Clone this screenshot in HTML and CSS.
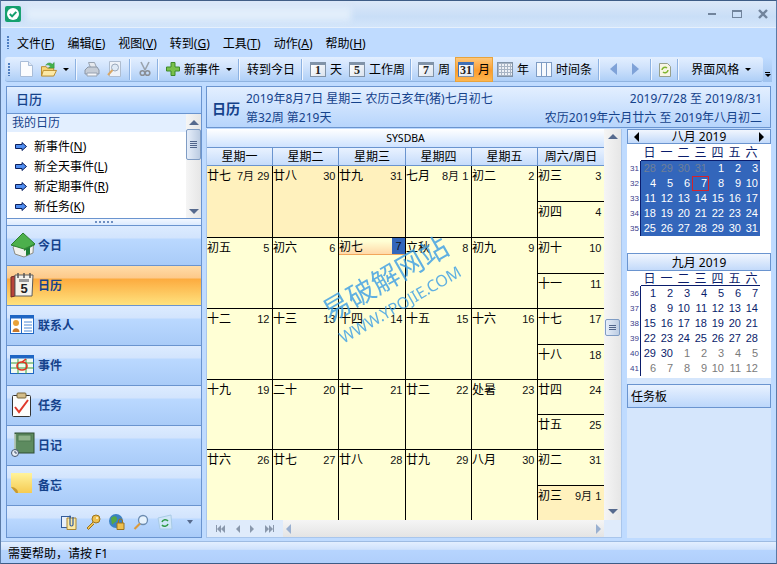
FILE: index.html
```html
<!DOCTYPE html>
<html lang="zh-CN">
<head>
<meta charset="utf-8">
<title>日历</title>
<link rel="stylesheet" href="styles.css">
</head>
<body>
<div class="window">
  <header class="titlebar">
    <svg class="logo" viewBox="0 0 16 16"><rect width="16" height="16" rx="2" fill="#14a06e"/><circle cx="8" cy="8" r="6" fill="#fff"/><path d="M4.8 8l2.3 2.4 4.2-4.6" fill="none" stroke="#14a06e" stroke-width="2"/></svg>
    <div class="title-blur"></div>
    <div class="winbtns">
      <span class="win-min"></span>
      <span class="win-max"></span>
      <svg class="win-close" viewBox="0 0 10 10"><path d="M1 1l8 8M9 1l-8 8" stroke="#71849c" stroke-width="2.4"/></svg>
    </div>
  </header>

  <nav class="menubar">
    <span class="grip"></span>
    <span class="menu">文件(<u>F</u>)</span>
    <span class="menu">编辑(<u>E</u>)</span>
    <span class="menu">视图(<u>V</u>)</span>
    <span class="menu">转到(<u>G</u>)</span>
    <span class="menu">工具(<u>T</u>)</span>
    <span class="menu">动作(<u>A</u>)</span>
    <span class="menu">帮助(<u>H</u>)</span>
  </nav>

  <div class="toolrow">
    <div class="toolbar">
      <span class="grip"></span>
      <span class="tb">
        <svg class="i13" viewBox="0 0 13 16"><path d="M.5.5h8l4 4v11H.5z" fill="#fbfcfe" stroke="#a9bdd8"/><path d="M8.5.5v4h4" fill="#dfe8f4" stroke="#a9bdd8"/></svg>
      </span>
      <span class="tb tb-folder">
        <svg class="i16" viewBox="0 0 17 16"><path d="M.5 5.500h5l1 1.500h7v8H.5z" fill="#f7d67a" stroke="#b98a2a"/><path d="M.5 15.500l2-6h14l-3 6z" fill="#fce9a6" stroke="#b98a2a"/><path d="M5 4c2-3 5-3 7-1l2-2v6H8l2-2c-1-1-3-2-5-1z" fill="#43b14b" stroke="#2c8a36" stroke-width=".5"/></svg>
        <span class="caret caret-gap"></span>
      </span>
      <span class="sep"></span>
      <span class="tb">
        <svg class="i16" viewBox="0 0 16 16"><path d="M4.500 1.500h6l2 5h-6z" fill="#e6e9ee" stroke="#98a3b2"/><path d="M1 9l3-3h9l2 3v4H1z" fill="#c5ccd6" stroke="#8b96a6"/><path d="M3 12h10v3H3z" fill="#f4f5f8" stroke="#98a3b2"/></svg>
      </span>
      <span class="tb">
        <svg class="i14" viewBox="0 0 14 16"><path d="M2.500.5h11v15h-11z" fill="#eef2f8" stroke="#aebccf"/><circle cx="8" cy="6.500" r="3.500" fill="#dfeaf6" stroke="#9aa8ba"/><path d="M5.500 9L1 14" stroke="#d9a765" stroke-width="2"/></svg>
      </span>
      <span class="sep sep-wide"></span>
      <span class="tb">
        <svg class="i12" viewBox="0 0 12 16"><path d="M2 1l4 8M10 1L6 9" stroke="#9aa3ae" stroke-width="1.600"/><circle cx="3.500" cy="12" r="2.300" fill="none" stroke="#8a8f96" stroke-width="1.600"/><circle cx="8.500" cy="12" r="2.300" fill="none" stroke="#8a8f96" stroke-width="1.600"/></svg>
      </span>
      <span class="sep"></span>
      <span class="tb">
        <svg class="i14" viewBox="0 0 14 14"><path d="M5 .5h4V5h4.500v4H9v4.500H5V9H.5V5H5z" fill="#79c04a" stroke="#3d8a2a"/></svg>
        <span class="lbl">新事件</span>
        <span class="caret caret-gap"></span>
      </span>
      <span class="sep"></span>
      <span class="tb"><span class="lbl">转到今日</span></span>
      <span class="sep"></span>
      <span class="tb"><span class="calic"><b>1</b></span><span class="lbl">天</span></span>
      <span class="tb"><span class="calic"><b>5</b></span><span class="lbl">工作周</span></span>
      <span class="sep sep-tight"></span>
      <span class="tb"><span class="calic"><b>7</b></span><span class="lbl">周</span></span>
      <span class="tb tb-on"><span class="calic calic-wide"><b>31</b></span><span class="lbl">月</span></span>
      <span class="tb"><span class="calic calic-year"></span><span class="lbl">年</span></span>
      <span class="tb"><span class="calic calic-time"></span><span class="lbl">时间条</span></span>
      <span class="sep"></span>
      <span class="tb tb-arrow"><span class="tri-l"></span></span>
      <span class="tb tb-arrow"><span class="tri-r"></span></span>
      <span class="sep"></span>
      <span class="tb">
        <svg class="i12" viewBox="0 0 12 16"><path d="M.5 2.500h8l3 3v10H.5z" fill="#f7f5e4" stroke="#98a08a"/><path d="M3 9a3 3 0 0 1 5-2M9 9a3 3 0 0 1-5 2" fill="none" stroke="#7fb52f" stroke-width="1.500"/></svg>
      </span>
      <span class="sep"></span>
      <span class="tb tb-style"><span class="lbl">界面风格</span><span class="caret caret-gap"></span></span>
    </div>
    <span class="overflow"><i></i><b></b></span>
  </div>

  <main class="main">
    <aside class="left">
      <h2 class="left-head">日历</h2>
      <div class="list">
        <div class="list-body">
          <div class="list-title">我的日历</div>
          <div class="list-item"><svg class="arrow" viewBox="0 0 12 9"><path d="M.5 2.500h6.500V.5L11.500 4.500 7 8.500V6.500H.5z" fill="#4f8df0" stroke="#0b1f5c"/></svg>新事件(<u>N</u>)</div>
          <div class="list-item"><svg class="arrow" viewBox="0 0 12 9"><path d="M.5 2.500h6.500V.5L11.500 4.500 7 8.500V6.500H.5z" fill="#4f8df0" stroke="#0b1f5c"/></svg>新全天事件(<u>L</u>)</div>
          <div class="list-item"><svg class="arrow" viewBox="0 0 12 9"><path d="M.5 2.500h6.500V.5L11.500 4.500 7 8.500V6.500H.5z" fill="#4f8df0" stroke="#0b1f5c"/></svg>新定期事件(<u>R</u>)</div>
          <div class="list-item"><svg class="arrow" viewBox="0 0 12 9"><path d="M.5 2.500h6.500V.5L11.500 4.500 7 8.500V6.500H.5z" fill="#4f8df0" stroke="#0b1f5c"/></svg>新任务(<u>K</u>)</div>
        </div>
        <div class="vscroll vscroll-list">
          <span class="tri-up"></span>
          <span class="thumb thumb-list"><i></i><i></i><i></i><i></i></span>
          <span class="spacer"></span>
          <span class="tri-down"></span>
        </div>
      </div>
      <div class="splitter"><span></span></div>
      <div class="nav">
        <div class="nav-item">
          <svg class="nav-ic" viewBox="0 0 26 26"><path d="M3 15l2 7 9 3 9-4 .5-9L13 8z" fill="#f2f2ee" stroke="#8c8c84"/><path d="M1 13L13 1l12 11-11 5z" fill="#4cb04c" stroke="#2a7d2e"/><path d="M14 17l11-5v1l-11 6z" fill="#2f8a34"/><path d="M16 17l4-2v7l-4 2z" fill="#1f7f35"/></svg>
          <span>今日</span>
        </div>
        <div class="nav-item nav-on">
          <svg class="nav-ic" viewBox="0 0 26 26"><path d="M1 5l4-1v20l-4 1z" fill="#b8433a" stroke="#6a2a26"/><path d="M5 3h18l-1 21H5z" fill="#f4f2ec" stroke="#5c5c5c"/><path d="M8 1v5M14 1v5M20 1v5" stroke="#555" stroke-width="1.500"/><rect x="9" y="7" width="10" height="3" fill="#9a9a9a"/><text x="14" y="21" class="nav-digit" text-anchor="middle">5</text></svg>
          <span>日历</span>
        </div>
        <div class="nav-item">
          <svg class="nav-ic" viewBox="0 0 26 20"><rect x=".5" y=".5" width="23" height="18" fill="#fff" stroke="#1f66c4"/><rect x=".5" y=".5" width="23" height="3" fill="#1f66c4"/><path d="M11.500 1v18" stroke="#1f66c4"/><circle cx="6" cy="8" r="3" fill="#e9a23a"/><path d="M2.500 17c0-5 7-5 7 0z" fill="#c9792a"/><path d="M14 7h8M14 10h8M14 13h8M14 16h8" stroke="#4e8ad6"/></svg>
          <span>联系人</span>
        </div>
        <div class="nav-item">
          <svg class="nav-ic" viewBox="0 0 26 20"><rect x=".5" y=".5" width="23" height="18" fill="#f3fbf0" stroke="#1f66c4"/><rect x=".5" y=".5" width="23" height="3" fill="#1f66c4"/><path d="M1 8h23M1 13h23M8 4v15M16 4v15" stroke="#3f9a3f"/><ellipse cx="12" cy="11" rx="5" ry="4" fill="none" stroke="#e0301e" stroke-width="1.600"/><path d="M12 7l4-3" stroke="#e0301e" stroke-width="1.500"/></svg>
          <span>事件</span>
        </div>
        <div class="nav-item">
          <svg class="nav-ic" viewBox="0 0 26 26"><rect x="2.500" y="3.500" width="18" height="21" rx="1" fill="#fdfdfb" stroke="#333"/><rect x="7" y="1" width="9" height="5" rx="1" fill="#d3bd8a" stroke="#77653a"/><path d="M5 15l4 5 9-12" fill="none" stroke="#e0382a" stroke-width="2"/></svg>
          <span>任务</span>
        </div>
        <div class="nav-item">
          <svg class="nav-ic" viewBox="0 0 26 26"><rect x="5" y="1" width="19" height="20" fill="#5d8b5f" stroke="#2f4d33"/><rect x="8" y="3" width="13" height="6" fill="#8eb28a" stroke="#4f7a52"/><path d="M5 2v19" stroke="#c8d8c8" stroke-width="1.500"/><circle cx="5" cy="21" r="3.500" fill="#e8edf5" stroke="#46566e"/><path d="M5 19v2h2" fill="none" stroke="#46566e"/></svg>
          <span>日记</span>
        </div>
        <div class="nav-item">
          <svg class="nav-ic" viewBox="0 0 26 26"><defs><linearGradient id="note" x1="0" y1="0" x2="0" y2="1"><stop offset="0" stop-color="#fff39c"/><stop offset="1" stop-color="#f6cb52"/></linearGradient></defs><path d="M1 1h21v20H6l-5-6z" fill="url(#note)"/><path d="M1 15c2 0 7 1 7 6H6z" fill="#c79a30"/></svg>
          <span>备忘</span>
        </div>
        <div class="nav-tools">
          <svg class="ntool" viewBox="0 0 16 16"><rect x=".5" y="2.500" width="9" height="11" fill="#e8f0fb" stroke="#335c9a"/><path d="M6 4h9v11.500H6z" fill="#fbe9a5" stroke="#a98632"/><path d="M9 1.500v9a1.500 1.500 0 0 0 3 0V3" fill="none" stroke="#335c9a" stroke-width="1.200"/></svg>
          <svg class="ntool" viewBox="0 0 16 16"><circle cx="11" cy="5" r="4" fill="#eec04f" stroke="#9b7420"/><circle cx="12" cy="4" r="1" fill="#fff8d8"/><path d="M8 8l-6 6 1.500 1.500L9 10" fill="#eec04f" stroke="#9b7420"/></svg>
          <svg class="ntool" viewBox="0 0 16 16"><circle cx="7" cy="7" r="7" fill="#3b82c4"/><path d="M2 4c3-3 6-2 6 1S4 9 3 11z" fill="#55a845"/><path d="M8 9h7v6.500H8z" fill="#eec04f" stroke="#9b7420"/><path d="M9.500 9V7a2 2 0 0 1 4 0v2" fill="none" stroke="#9b7420"/></svg>
          <svg class="ntool" viewBox="0 0 16 16"><circle cx="10" cy="6" r="4.500" fill="#e6f2fd" stroke="#6b8bb0" stroke-width="1.300"/><path d="M7 9.500L1.500 15" stroke="#dc9a3c" stroke-width="2.200"/></svg>
          <svg class="ntool" viewBox="0 0 16 16"><path d="M1 4l13-3 1 14H3z" fill="#cfe6f7" stroke="#a9cbe6"/><path d="M5 8a3.500 3.500 0 0 1 6-1M11 10a3.500 3.500 0 0 1-6 1" fill="none" stroke="#2f9a47" stroke-width="1.600"/></svg>
          <span class="tri-down tri-small"></span>
        </div>
      </div>
    </aside>

    <div class="content">
      <div class="cal-head">
        <h1>日历</h1>
        <div class="cal-info">
          <div class="info-row"><span>2019年8月7日 星期三 农历己亥年(猪)七月初七</span><span>2019/7/28 至 2019/8/31</span></div>
          <div class="info-row"><span>第32周 第219天</span><span>农历2019年六月廿六 至 2019年八月初二</span></div>
        </div>
      </div>
      <div class="content-row">
        <section class="cal-frame">
          <div class="cal-body">
            <div class="cal-main">
              <div class="owner">SYSDBA</div>
              <div class="weekdays">
                <div>星期一</div><div>星期二</div><div>星期三</div><div>星期四</div><div>星期五</div><div>周六/周日</div>
              </div>
              <div class="grid">
                <div class="cell off"><span>廿七</span><span class="num">7月 29</span></div>
                <div class="cell off"><span>廿八</span><span class="num">30</span></div>
                <div class="cell off"><span>廿九</span><span class="num">31</span></div>
                <div class="cell"><span>七月</span><span class="num">8月 1</span></div>
                <div class="cell"><span>初二</span><span class="num">2</span></div>
                <div class="cell weekend"><div class="sub"><span>初三</span><span class="num">3</span></div><div class="sub"><span>初四</span><span class="num">4</span></div></div>

                <div class="cell"><span>初五</span><span class="num">5</span></div>
                <div class="cell"><span>初六</span><span class="num">6</span></div>
                <div class="cell today"><div class="today-strip"><span>初七</span><span class="today-num">7</span></div></div>
                <div class="cell"><span>立秋</span><span class="num">8</span></div>
                <div class="cell"><span>初九</span><span class="num">9</span></div>
                <div class="cell weekend"><div class="sub"><span>初十</span><span class="num">10</span></div><div class="sub"><span>十一</span><span class="num">11</span></div></div>

                <div class="cell"><span>十二</span><span class="num">12</span></div>
                <div class="cell"><span>十三</span><span class="num">13</span></div>
                <div class="cell"><span>十四</span><span class="num">14</span></div>
                <div class="cell"><span>十五</span><span class="num">15</span></div>
                <div class="cell"><span>十六</span><span class="num">16</span></div>
                <div class="cell weekend"><div class="sub"><span>十七</span><span class="num">17</span></div><div class="sub"><span>十八</span><span class="num">18</span></div></div>

                <div class="cell"><span>十九</span><span class="num">19</span></div>
                <div class="cell"><span>二十</span><span class="num">20</span></div>
                <div class="cell"><span>廿一</span><span class="num">21</span></div>
                <div class="cell"><span>廿二</span><span class="num">22</span></div>
                <div class="cell"><span>处暑</span><span class="num">23</span></div>
                <div class="cell weekend"><div class="sub"><span>廿四</span><span class="num">24</span></div><div class="sub"><span>廿五</span><span class="num">25</span></div></div>

                <div class="cell"><span>廿六</span><span class="num">26</span></div>
                <div class="cell"><span>廿七</span><span class="num">27</span></div>
                <div class="cell"><span>廿八</span><span class="num">28</span></div>
                <div class="cell"><span>廿九</span><span class="num">29</span></div>
                <div class="cell"><span>八月</span><span class="num">30</span></div>
                <div class="cell weekend"><div class="sub"><span>初二</span><span class="num">31</span></div><div class="sub sub-off"><span>初三</span><span class="num">9月 1</span></div></div>
              </div>
              <div class="watermark"><div class="wm-big">易破解网站</div><div class="wm-small">WWW.YPOJIE.COM</div></div>
            </div>
            <div class="vscroll vscroll-cal">
              <span class="tri-up"></span>
              <span class="spacer spacer-top"></span>
              <span class="thumb thumb-cal"><i></i><i></i><i></i></span>
              <span class="spacer"></span>
              <span class="tri-down"></span>
            </div>
          </div>
          <div class="cal-foot">
            <div class="pager">
              <span class="pg pg-first"><i></i><b></b><b></b></span>
              <span class="pg"><b></b></span>
              <span class="pg"><em></em></span>
              <span class="pg pg-last"><em></em><em></em><i></i></span>
            </div>
            <div class="hscroll"><span class="tri-l tri-h"></span><span class="tri-r tri-h"></span></div>
            <div class="corner"></div>
          </div>
        </section>

        <aside class="right">
          <div class="minis">
            <div class="mini">
              <div class="mini-head"><span class="tri-black-l"></span><span>八月 2019</span><span class="tri-black-r"></span></div>
              <div class="mini-dow"><span>日</span><span>一</span><span>二</span><span>三</span><span>四</span><span>五</span><span>六</span></div>
              <div class="mini-wrap">
                <div class="mini-weeks"><span>31</span><span>32</span><span>33</span><span>34</span><span>35</span></div>
                <div class="mini-days mini-sel">
                  <span class="dim">28</span><span class="dim">29</span><span class="dim">30</span><span class="dim">31</span><span>1</span><span>2</span><span>3</span>
                  <span>4</span><span>5</span><span>6</span><span class="mini-today">7</span><span>8</span><span>9</span><span>10</span>
                  <span>11</span><span>12</span><span>13</span><span>14</span><span>15</span><span>16</span><span>17</span>
                  <span>18</span><span>19</span><span>20</span><span>21</span><span>22</span><span>23</span><span>24</span>
                  <span>25</span><span>26</span><span>27</span><span>28</span><span>29</span><span>30</span><span>31</span>
                </div>
              </div>
            </div>
            <div class="mini mini-sep">
              <div class="mini-head mini-head-plain"><span>九月 2019</span></div>
              <div class="mini-dow"><span>日</span><span>一</span><span>二</span><span>三</span><span>四</span><span>五</span><span>六</span></div>
              <div class="mini-wrap">
                <div class="mini-weeks"><span>36</span><span>37</span><span>38</span><span>39</span><span>40</span><span>41</span></div>
                <div class="mini-days">
                  <span>1</span><span>2</span><span>3</span><span>4</span><span>5</span><span>6</span><span>7</span>
                  <span>8</span><span>9</span><span>10</span><span>11</span><span>12</span><span>13</span><span>14</span>
                  <span>15</span><span>16</span><span>17</span><span>18</span><span>19</span><span>20</span><span>21</span>
                  <span>22</span><span>23</span><span>24</span><span>25</span><span>26</span><span>27</span><span>28</span>
                  <span>29</span><span>30</span><span class="dim">1</span><span class="dim">2</span><span class="dim">3</span><span class="dim">4</span><span class="dim">5</span>
                  <span class="dim">6</span><span class="dim">7</span><span class="dim">8</span><span class="dim">9</span><span class="dim">10</span><span class="dim">11</span><span class="dim">12</span>
                </div>
              </div>
            </div>
          </div>
          <div class="taskboard">任务板</div>
          <div class="task-body"></div>
        </aside>
      </div>
    </div>
  </main>

  <footer class="status">需要帮助，请按 F1</footer>
</div>
</body>
</html>
```
FILE: styles.css
```css
* { box-sizing: border-box; }
html, body { margin: 0; padding: 0; }
body {
  width: 777px;
  height: 564px;
  overflow: hidden;
  font-family: "Noto Sans", "Noto Sans CJK SC", sans-serif;
  font-size: 12px;
  color: #000;
}
u { text-decoration: underline; text-underline-offset: 1px; }
h1, h2 { margin: 0; }

.window {
  width: 777px;
  height: 564px;
  display: flex;
  flex-direction: column;
  background: #bfdbff;
  border: 1px solid #5a7aa6;
  border-top-color: #3d5c86;
  border-bottom-color: #3d5c86;
}

/* title bar */
.titlebar {
  height: 27px;
  flex: none;
  display: flex;
  align-items: center;
  padding-left: 4px;
  background: linear-gradient(#dbe8f8, #c9def7 60%, #d3e5fa);
  border-bottom: 1px solid #e6f0fc;
}
.logo { width: 16px; height: 16px; flex: none; }
.title-blur {
  width: 325px;
  height: 14px;
  margin-left: 5px;
  background: #e2eefb;
  filter: blur(3px);
}
.winbtns { margin-left: auto; display: flex; align-items: center; }
.win-min { width: 8px; height: 2px; margin-right: 16px; background: #71849c; }
.win-max { width: 10px; height: 8px; margin-right: 16px; border: 1px solid #71849c; border-top-width: 2px; }
.win-close { width: 10px; height: 10px; margin-right: 8px; }

/* menu */
.menubar {
  height: 29px;
  flex: none;
  display: flex;
  align-items: center;
  padding-left: 6px;
  background: #bfdbff;
}
.grip {
  width: 3px;
  height: 13px;
  flex: none;
  background: radial-gradient(circle at 1px 1px, #4f7fc2 1px, transparent 1.2px) 0 0 / 3px 3px;
}
.menu { margin-left: 7px; margin-right: 6px; white-space: nowrap; }
.menu:first-of-type { margin-left: 8px; }

/* toolbar */
.toolrow {
  height: 26px;
  flex: none;
  display: flex;
  padding-left: 4px;
}
.toolbar {
  width: 758px;
  height: 25px;
  display: flex;
  align-items: center;
  gap: 1px;
  padding-left: 3px;
  border-radius: 3px;
  background: linear-gradient(#e3efff, #cfe2fc 45%, #aecff7);
  border-bottom: 1px solid #8fb3e0;
}
.toolbar > .grip { margin-right: 5px; }
.tb {
  height: 22px;
  display: flex;
  align-items: center;
  padding: 0 3px;
  white-space: nowrap;
}
.tb-folder { margin-left: 1px; }
.tb-on {
  height: 25px;
  margin-left: 1px;
  padding: 0 2px;
  background: linear-gradient(#fdc77a, #fb9c2e 55%, #fdb64f);
  border: 1px solid #e8a33c;
}
.tb-arrow { padding: 0 3px; margin-left: 3px; margin-right: 5px; }
.tb-style { padding-left: 8px; }
.sep {
  width: 2px;
  height: 21px;
  margin: 0 3px 0 2px;
  background: #f2f7ff;
  border-left: 1px solid #8db2e2;
}
.sep-wide { margin: 0 4px; }
.sep-tight { margin: 0 2px 0 1px; }
.lbl { margin-left: 4px; }
.tb > .lbl:first-child { margin-left: 0; }
.i12 { width: 12px; height: 16px; }
.i13 { width: 13px; height: 16px; }
.i14 { width: 14px; height: 16px; }
.i16 { width: 16px; height: 16px; }
.caret {
  width: 0;
  height: 0;
  border: 3px solid transparent;
  border-top: 3px solid #000;
  border-bottom: 0;
}
.caret-gap { margin-left: 6px; }
.calic {
  width: 16px;
  height: 15px;
  flex: none;
  display: flex;
  align-items: flex-end;
  justify-content: center;
  border: 1px solid #8193a8;
  border-top: 3px solid #8193a8;
  background: linear-gradient(135deg, #fff, #dbe3ee);
  color: #222;
  font-family: "Liberation Serif", serif;
  font-size: 12px;
  line-height: 12px;
}
.calic-wide { border-top-color: #3f6fb5; border-left-color: #3f6fb5; }
.calic-year {
  border-top-width: 1px;
  background: repeating-linear-gradient(90deg, #a8b4c4 0 1px, transparent 1px 3px), repeating-linear-gradient(#a8b4c4 0 1px, #eef1f6 1px 3px);
}
.calic-time {
  border: 1px solid #7e9cc4;
  background: linear-gradient(90deg, #f6f9fd 0 4px, #7e9cc4 4px 5px, #f6f9fd 5px 9px, #7e9cc4 9px 10px, #f6f9fd 10px);
}
.tri-l, .tri-r {
  width: 0;
  height: 0;
  border-top: 6px solid transparent;
  border-bottom: 6px solid transparent;
}
.tri-l { border-right: 7px solid #7fa2d8; }
.tri-r { border-left: 7px solid #7fa2d8; }
.overflow {
  width: 9px;
  height: 25px;
  background: linear-gradient(#bfdbff, #9fc2ee);
  display: flex;
  flex-direction: column;
  align-items: center;
  justify-content: flex-end;
  padding-bottom: 5px;
  gap: 1px;
}
.overflow i { width: 5px; height: 1px; background: #000; }
.overflow b { width: 0; height: 0; border: 3px solid transparent; border-top: 3px solid #000; border-bottom: 0; }

/* main */
.main {
  flex: 1;
  min-height: 0;
  display: flex;
  padding: 3px 5px 0;
  gap: 4px;
}

/* left */
.left {
  width: 196px;
  height: 452px;
  flex: none;
  display: flex;
  flex-direction: column;
  border: 1px solid #6a94cf;
  background: #bfdbff;
}
.left-head {
  height: 27px;
  flex: none;
  display: flex;
  align-items: center;
  padding: 0 0 3px 9px;
  font-size: 13px;
  font-weight: 500;
  color: #15428b;
  background: linear-gradient(#e3efff, #afd2ff);
  border-bottom: 1px solid #6a94cf;
}
.list { height: 104px; flex: none; display: flex; background: #fff; }
.list-body { flex: 1; }
.list-title {
  height: 18px;
  margin-bottom: 4px;
  line-height: 18px;
  padding-left: 5px;
  background: #e3efff;
  color: #15428b;
}
.list-item {
  height: 20px;
  display: flex;
  align-items: center;
  padding-left: 8px;
  white-space: nowrap;
}
.arrow { width: 12px; height: 9px; margin-right: 7px; flex: none; }
.vscroll {
  width: 15px;
  flex: none;
  display: flex;
  flex-direction: column;
  align-items: center;
  background: linear-gradient(90deg, #f5f5f5, #e6e6e6);
}
.vscroll-list { padding-top: 6px; padding-bottom: 4px; }
.tri-up { width: 0; height: 0; border: 5px solid transparent; border-bottom: 5px solid #566a8e; border-top: 0; flex: none; }
.tri-down { width: 0; height: 0; border: 5px solid transparent; border-top: 5px solid #566a8e; border-bottom: 0; flex: none; }
.thumb {
  width: 15px;
  flex: none;
  display: flex;
  flex-direction: column;
  align-items: center;
  justify-content: center;
  gap: 1px;
  border: 1px solid #7f9cc4;
  border-radius: 2px;
  background: linear-gradient(90deg, #e6eefa, #bccce2);
}
.thumb i { width: 7px; height: 1px; background: #50648a; }
.thumb-list { height: 31px; margin-top: 4px; }
.spacer { flex: 1; }
.splitter {
  height: 8px;
  flex: none;
  display: flex;
  align-items: center;
  justify-content: center;
  background: linear-gradient(#f2f7ff, #dcebff);
  border-top: 1px solid #6a94cf;
  border-bottom: 1px solid #6a94cf;
}
.splitter span { width: 19px; height: 2px; background: repeating-linear-gradient(90deg, #6f90c2 0 2px, transparent 2px 4px); }
.nav { flex: 1; display: flex; flex-direction: column; min-height: 0; }
.nav-item {
  height: 40px;
  flex: none;
  display: flex;
  align-items: center;
  padding: 0 0 1px 3px;
  border-bottom: 1px solid #6a94cf;
  background: linear-gradient(#dcebff 0, #d2e4fd 12px, #bad8ff 13px, #a9cbf8 100%);
  font-weight: 700;
  color: #15428b;
}
.nav-on { background: linear-gradient(#ffdca8 0, #fdc98a 12px, #fcab3f 13px, #ffe27e 100%); }
.nav-ic { width: 26px; height: 26px; flex: none; margin-right: 2px; }
.nav-digit { font-family: "Liberation Sans", sans-serif; font-size: 13px; font-weight: 700; fill: #222; }
.nav-tools {
  flex: 1;
  display: flex;
  align-items: center;
  justify-content: flex-end;
  gap: 8px;
  padding-right: 8px;
  background: linear-gradient(#dcebff 0, #d2e4fd 12px, #bad8ff 13px, #a9cbf8 100%);
}
.ntool { width: 16px; height: 16px; flex: none; }
.tri-small { margin-left: 6px; border-width: 3px; border-top-width: 4px; }

/* content: heading across the calendar and the side column */
.content {
  width: 565px;
  height: 452px;
  flex: none;
  display: flex;
  flex-direction: column;
  gap: 1px;
}
.cal-head {
  height: 42px;
  flex: none;
  display: flex;
  align-items: center;
  padding: 0 8px 0 5px;
  color: #15428b;
  border: 1px solid #6a94cf;
  background: linear-gradient(#e3efff, #b7d5fc);
}
.cal-head h1 { font-size: 14px; font-weight: 700; margin-right: 6px; margin-top: 2px; white-space: nowrap; }
.cal-info { flex: 1; display: flex; flex-direction: column; gap: 3px; padding-top: 3px; }
.info-row { display: flex; justify-content: space-between; white-space: nowrap; line-height: 16px; }
.content-row { flex: 1; min-height: 0; display: flex; gap: 5px; }
.cal-frame {
  width: 416px;
  flex: none;
  display: flex;
  flex-direction: column;
  border: 1px solid #a9c6ec;
  border-top: 0;
  background: #dfebfb;
}
.cal-body { flex: 1; min-height: 0; display: flex; }
.cal-main { width: 397px; position: relative; }
.owner {
  height: 19px;
  line-height: 18px;
  text-align: center;
  font-size: 10.5px;
  background: linear-gradient(#ffffff, #cfe3ff);
  border-bottom: 1px solid #6a94cf;
}
.weekdays {
  height: 18px;
  display: grid;
  grid-template-columns: 66px 66px 67px 66px 66px 66px;
  background: linear-gradient(#e9f2ff, #c6dcfb);
  border-bottom: 1px solid #6a94cf;
}
.weekdays div { text-align: center; line-height: 17px; border-right: 1px solid #6a94cf; }
.weekdays div:last-child { border-right: 0; }
.grid {
  display: grid;
  grid-template-columns: 66px 66px 67px 66px 66px 66px;
  grid-template-rows: 72px 71px 71px 70px 70px;
  background: #ffffd5;
}
.cell {
  display: flex;
  justify-content: space-between;
  align-items: flex-start;
  line-height: 16px;
  padding: 2px 3px 0 0;
  border-right: 1px solid #000;
  border-bottom: 1px solid #000;
  white-space: nowrap;
}
.cell:nth-child(6n) { border-right: 0; }
.cell:nth-last-child(-n+6) { border-bottom: 0; }
.off { background: #fff1bd; }
.num { font-family: "Liberation Sans", sans-serif; font-size: 11px; color: #111; letter-spacing: -0.3px; word-spacing: 1px; }
.weekend { flex-direction: column; padding: 0; align-items: stretch; }
.sub {
  flex: 1;
  display: flex;
  justify-content: space-between;
  padding: 2px 3px 0 0;
  min-height: 0;
}
.sub:first-child { border-bottom: 1px solid #000; }
.sub-off { background: #fff1bd; }
.today { padding: 0; }
.today-strip {
  width: 100%;
  height: 17px;
  display: flex;
  justify-content: space-between;
  align-items: flex-start;
  padding-top: 1px;
  border-bottom: 1px solid #f2a65a;
  background: linear-gradient(#ffffd5 0 3px, #ffd9a8);
}
.today-num {
  width: 13px;
  height: 16px;
  margin-top: -1px;
  text-align: center;
  font-family: "Liberation Sans", sans-serif;
  font-size: 11px;
  background: #3366bb;
  color: #111;
}
.watermark {
  position: absolute;
  left: 103px;
  top: 128px;
  width: 160px;
  transform: rotate(-30deg);
  color: #3a9de4;
  opacity: .8;
  pointer-events: none;
  text-align: center;
  white-space: nowrap;
}
.wm-big { font-size: 28px; line-height: 40px; }
.wm-small { font-size: 16px; line-height: 20px; }
.vscroll-cal { width: 17px; padding: 5px 0 6px; }
.spacer-top { flex: none; height: 180px; }
.thumb-cal { width: 15px; height: 17px; }
.cal-foot { height: 17px; flex: none; display: flex; }
.pager { width: 76px; display: flex; align-items: center; justify-content: space-around; padding: 0 4px; background: #dfebfb; }
.pg { display: flex; align-items: center; }
.pg i { width: 1px; height: 7px; background: #8a98ac; }
.pg b { width: 0; height: 0; border: 4px solid transparent; border-left: 0; border-right: 4px solid #8a98ac; }
.pg em { width: 0; height: 0; border: 4px solid transparent; border-right: 0; border-left: 4px solid #8a98ac; }
.hscroll {
  width: 321px;
  display: flex;
  align-items: center;
  justify-content: space-between;
  padding: 0 3px;
  background: linear-gradient(#f5f5f5, #e4e4e4);
}
.tri-h { border-top-width: 5px; border-bottom-width: 5px; }
.tri-h.tri-l { border-right: 5px solid #9ab0d0; }
.tri-h.tri-r { border-left: 5px solid #9ab0d0; }
.corner { flex: 1; background: #dfebfb; }

/* right */
.right {
  width: 144px;
  flex: none;
  display: flex;
  flex-direction: column;
  background: #d5e6fc;
}
.minis { background: #fff; height: 249px; flex: none; }
.mini-head {
  height: 15px;
  display: flex;
  align-items: center;
  justify-content: space-between;
  padding: 0 6px;
  line-height: 13px;
  border: 1px solid #6a94cf;
  background: linear-gradient(#f1f6fe, #c3dafa);
  white-space: nowrap;
}
.mini-head-plain { height: 18px; justify-content: center; }
.tri-black-l, .tri-black-r { width: 0; height: 0; border-top: 5px solid transparent; border-bottom: 5px solid transparent; }
.tri-black-l { border-right: 5px solid #000; }
.tri-black-r { border-left: 5px solid #000; }
.mini-sep { margin-top: 17px; }
.mini-sep .mini-dow { height: 15px; line-height: 15px; }
.mini-dow {
  margin-left: 14px;
  height: 17px;
  width: 119px;
  display: grid;
  grid-template-columns: repeat(7, 17px);
  border-bottom: 1px solid #0a1c6b;
  color: #0a1c6b;
  line-height: 17px;
  text-align: center;
}
.mini-wrap { display: flex; }
.mini-weeks {
  width: 14px;
  flex: none;
  display: flex;
  flex-direction: column;
  font-family: "Liberation Sans", sans-serif;
  font-size: 8px;
  color: #3a3a8a;
  text-align: left;
  padding-left: 3px;
  border-right: 1px solid #0a1c6b;
}
.mini-weeks span { height: 15px; line-height: 15px; }
.mini-days {
  width: 119px;
  display: grid;
  grid-template-columns: repeat(7, 17px);
  grid-auto-rows: 15px;
  font-family: "Liberation Sans", sans-serif;
  font-size: 11px;
  line-height: 15px;
  color: #0a1c6b;
  text-align: right;
}
.mini-days span { padding-right: 2px; }
.mini-days .dim { color: #7a7a7a; }
.mini-sel { background: #3366bb; color: #fff; }
.mini-sel .dim { color: #6f7f97; }
.mini-today { outline: 1px solid #d4222a; outline-offset: -1px; }
.taskboard {
  height: 24px;
  flex: none;
  margin-top: 6px;
  display: flex;
  align-items: center;
  padding-left: 3px;
  border: 1px solid #6a94cf;
  background: linear-gradient(#e9f2ff, #bcd7fb);
}
.task-body { flex: 1; }

/* status */
.status {
  height: 22px;
  flex: none;
  margin-top: 2px;
  padding-left: 7px;
  line-height: 23px;
  white-space: nowrap;
  border-top: 1px solid #9dbbe2;
  background: linear-gradient(#e3efff, #cfe2fc 35%, #b6d4fe 40%, #b0cffb);
}
```
